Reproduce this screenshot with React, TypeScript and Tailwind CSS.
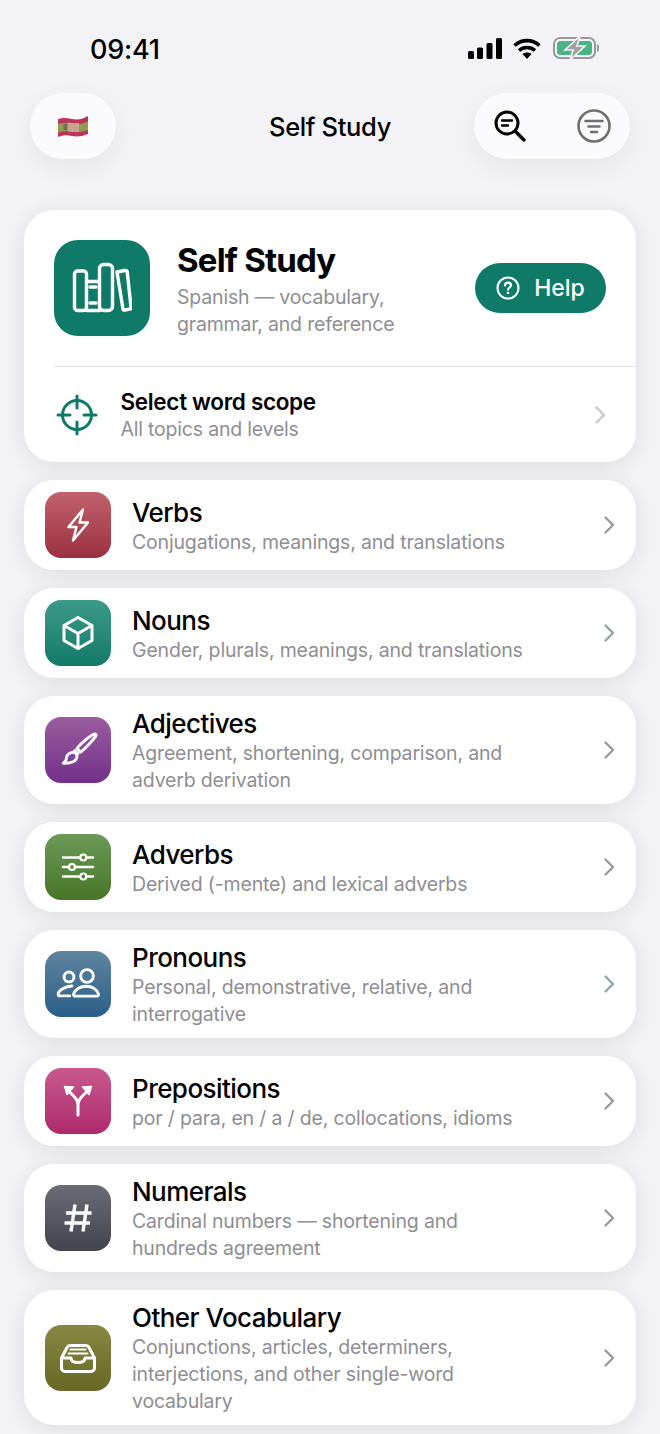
import type { ReactNode } from "react";

const FONT = "font-['Inter','Liberation_Sans',sans-serif]";

const Glyph = ({ children, size = 40 }: { children: ReactNode; size?: number }) => (
    <svg
        width={size}
        height={size}
        viewBox="0 0 40 40"
        fill="none"
        stroke="white"
        strokeWidth="2.6"
        strokeLinecap="round"
        strokeLinejoin="round"
    >
        {children}
    </svg>
);

const rows = [
    {
        title: "Verbs",
        lines: ["Conjugations, meanings, and translations"],
        gradient: "from-[#c2626f] to-[#9a303f]",
        chevron: "#98989d",
        icon: (
            <Glyph>
                <path d="M25 4.500 10.500 22h8L15 35.500 30 17.500h-8.500z" strokeWidth="2.400" />
            </Glyph>
        ),
    },
    {
        title: "Nouns",
        lines: ["Gender, plurals, meanings, and translations"],
        gradient: "from-[#3c9a88] to-[#0f7a68]",
        chevron: "#8ba8a3",
        icon: (
            <Glyph>
                <g strokeWidth="3">
                    <path d="M20 4.500 34 12.500v15L20 35.500 6 27.500v-15z" />
                    <path d="M6.500 12.800 20 20.500l13.500-7.700M20 20.500v15" />
                </g>
            </Glyph>
        ),
    },
    {
        title: "Adjectives",
        lines: ["Agreement, shortening, comparison, and", "adverb derivation"],
        gradient: "from-[#9a5c9e] to-[#74308a]",
        chevron: "#98989d",
        icon: (
            <Glyph size={44}>
                <path d="M35 5.500c-3 .5-12 8-16 13l3.500 3.500c5-4 13-13 14-15.500.3-.8-.7-1.200-1.500-1z" />
                <path d="M17 20.500l3 3" />
                <path d="M13.500 22.500c3-1.500 6 1 5.500 4-.6 3.500-5 6-12.500 5.500 2.500-1.500 3-3 3-5 .2-2 2-3.700 4-4.500z" />
            </Glyph>
        ),
    },
    {
        title: "Adverbs",
        lines: ["Derived (-mente) and lexical adverbs"],
        gradient: "from-[#6b9a58] to-[#4a7526]",
        chevron: "#98989d",
        icon: (
            <Glyph>
                <path d="M5 10.500h17M28.500 10.500h6.500M5 20h6M17 20h18M5 29.500h17M28.500 29.500h6.500" />
                <circle cx="25.300" cy="10.500" r="3" strokeWidth="2.200" />
                <circle cx="14" cy="20" r="3" strokeWidth="2.200" />
                <circle cx="25.300" cy="29.500" r="3" strokeWidth="2.200" />
            </Glyph>
        ),
    },
    {
        title: "Pronouns",
        lines: ["Personal, demonstrative, relative, and", "interrogative"],
        gradient: "from-[#60859f] to-[#2a5f88]",
        chevron: "#8ba8ab",
        icon: (
            <Glyph size={44}>
                <circle cx="11.800" cy="13.600" r="4.500" />
                <circle cx="28.200" cy="12.700" r="5.800" />
                <path d="M14.500 21.800c-6 .2-11.500 3.700-12.500 7-.3 1.200.3 2 1.500 2h9" />
                <path d="M17 31h20c1.500 0 2-.8 1.500-2C37 24.500 32.500 22 27.500 22S18 24.500 16 29c-.5 1.200.5 2 1 2z" />
            </Glyph>
        ),
    },
    {
        title: "Prepositions",
        lines: ["por / para, en / a / de, collocations, idioms"],
        gradient: "from-[#c9588e] to-[#ad2a6c]",
        chevron: "#98989d",
        icon: (
            <Glyph>
                <path d="M20 34V24c0-5-3-8-9.500-14M20 24c0-5 3-8 9.500-14" strokeWidth="3" />
                <path d="M6.500 5.500 15.500 6 9 13.500zM33.500 5.500 24.500 6 31 13.500z" fill="white" strokeWidth="1.400" />
            </Glyph>
        ),
    },
    {
        title: "Numerals",
        lines: ["Cardinal numbers — shortening and", "hundreds agreement"],
        gradient: "from-[#6c6c78] to-[#44444e]",
        chevron: "#98989d",
        icon: (
            <Glyph>
                <path d="M17 6.500 13 33.500M29 6.500l-4 27M8 15h25.500M6.500 25H32" strokeWidth="3.400" strokeLinecap="butt" />
            </Glyph>
        ),
    },
    {
        title: "Other Vocabulary",
        lines: ["Conjunctions, articles, determiners,", "interjections, and other single-word", "vocabulary"],
        gradient: "from-[#888843] to-[#686826]",
        chevron: "#98989d",
        icon: (
            <Glyph>
                <g strokeWidth="3">
                    <path d="M3.500 20 9 9.500c.7-1.500 1.500-2 3-2h16c1.500 0 2.300.5 3 2L36.500 20v10c0 2-1.500 3.500-3.500 3.500H7c-2 0-3.500-1.500-3.500-3.500z" />
                    <path d="M3.500 20H13c0 3 3 4.500 7 4.500s7-1.500 7-4.500h9.500" />
                </g>
                <path d="M12.500 11.500h15M10.500 15.500h19" strokeWidth="2" />
            </Glyph>
        ),
    },
];

const Chevron = ({ color, className = "" }: { color: string; className?: string }) => (
    <svg className={className} width="13" height="20" viewBox="0 0 13 20" fill="none" stroke={color} strokeWidth="2.400" strokeLinecap="round" strokeLinejoin="round">
        <path d="M2.500 2.500 10 10l-7.500 7.500" />
    </svg>
);

const StatusBar = () => (
    <div className="flex h-[93px] items-start justify-between pl-[90px] pr-[61px] pt-[33px]">
        <span className="mt-[1px] text-[27px] leading-[32px] font-medium tracking-[-0.2px] text-black">09:41</span>
        <svg width="131" height="28" viewBox="0 0 131 28" className="mt-[2px]">
            <rect x="0" y="16" width="6" height="8" rx="1.500" fill="black" />
            <rect x="9" y="12.500" width="6" height="11.500" rx="1.500" fill="black" />
            <rect x="18.500" y="8" width="6" height="16" rx="1.500" fill="black" />
            <rect x="28" y="3" width="6" height="21" rx="1.500" fill="black" />
            <path d="M46.500 10.500c7.500-6.500 17.500-6.500 25 0M51 15.500c4.500-4 11.500-4 16 0" fill="none" stroke="black" strokeWidth="3.600" />
            <path d="M54.500 19c2.500-2 6.500-2 9 0L59 24z" fill="black" />
            <rect x="86" y="3" width="41" height="20" rx="6" fill="none" stroke="#98989d" strokeWidth="2" />
            <rect x="89" y="6" width="35" height="14" rx="3.500" fill="#4cb382" />
            <path d="M129 9v8c1.500-.4 2.500-2 2.500-4s-1-3.600-2.500-4z" fill="#98989d" />
            <path d="M112 1 97 15h8l-3 10 15-14h-8z" fill="#a0a0a5" stroke="#f2f2f7" strokeWidth="1.600" />
        </svg>
    </div>
);

const FloatingButton = ({ className, children }: { className: string; children: ReactNode }) => (
    <div className={`flex h-[66px] items-center rounded-[33px] bg-[#fbfbfe] shadow-[0_8px_28px_rgba(0,0,0,0.06)] ${className}`}>
        {children}
    </div>
);

const NavBar = () => (
    <div className="grid h-[66px] grid-cols-[1fr_auto_1fr] items-center px-[30px]">
        <FloatingButton className="w-[86px] justify-center justify-self-start">
            <svg width="30" height="21" viewBox="0 0 30 21">
                <path d="M0 3c5-1.500 9-1 14 0s10 .5 16-3v18c-6 2.500-11 3-16 2s-9-1-14 1z" fill="#b9365a" />
                <path d="M0 8c5-1.500 9-1 14 0s10 .5 16-2.500v8.500c-6 2-11 2-16 1.500s-9-.5-14 1z" fill="#949b52" />
                <path d="M10 6.500c4 .5 8 1 11 .5v9c-3 .3-7 0-11-.5z" fill="#c6a48d" />
                <rect x="5.500" y="8" width="3.500" height="6" fill="#6f6f52" />
            </svg>
        </FloatingButton>
        <span className="pt-[2px] text-[25.500px] leading-[32px] font-medium tracking-[-0.35px] text-black">Self Study</span>
        <FloatingButton className="w-[156px] justify-between justify-self-end pl-[19px] pr-[18px]">
            <svg width="36" height="36" viewBox="0 0 36 36" fill="none" stroke="black" strokeWidth="3" strokeLinecap="round" className="-ml-[1px]">
                <circle cx="15" cy="15" r="11" />
                <path d="m23.500 23.500 8.500 8.500" strokeWidth="3.400" />
                <path d="M10 12.500h10M10 17.500h6" strokeWidth="2.400" />
            </svg>
            <svg width="36" height="36" viewBox="0 0 36 36" fill="none" stroke="#6e6e73" strokeWidth="2.600" strokeLinecap="round">
                <circle cx="18" cy="18" r="15.500" />
                <path d="M9.500 13h17M12.500 18.500h11M15 24h6" />
            </svg>
        </FloatingButton>
    </div>
);

const HeroCard = () => (
    <div className="rounded-[30px] bg-white shadow-[0_4px_24px_rgba(0,0,0,0.09)]">
        <div className="flex h-[156px] items-start pl-[30px] pr-[30px] pt-[30px]">
            <div className="flex h-[96px] w-[96px] shrink-0 items-center justify-center rounded-[24px] bg-[#0f7a68]">
                <svg width="60" height="52" viewBox="0 0 60 52" fill="none" stroke="white" strokeWidth="3.400" strokeLinejoin="round" strokeLinecap="round">
                    <rect x="2.500" y="9" width="12" height="39.500" rx="3" />
                    <path d="M14.500 19.500h13M14.500 48.500h13" />
                    <path d="M18 25h6M18 41h6" />
                    <rect x="27.500" y="2.500" width="13" height="46" rx="4" />
                    <path d="M45 10l8-1.500c1-.2 2 .4 2.200 1.400L59 45c.2 1-.4 2-1.400 2.200l-4.500.8c-1 .2-2-.4-2.200-1.400z" />
                </svg>
            </div>
            <div className="ml-[27px] min-w-0 flex-1">
                <div className="text-[33px] leading-[40px] font-bold tracking-[-0.8px] text-black">Self Study</div>
                <div className="mt-[4px] text-[19.500px] leading-[27px] tracking-[-0.18px] text-[#8e8e93]">
                    Spanish — vocabulary,
                    <br />
                    grammar, and reference
                </div>
            </div>
            <div className="mt-[23px] flex h-[50px] w-[131px] shrink-0 items-center justify-center gap-[14px] rounded-full bg-[#0f7a68]">
                <svg width="24" height="24" viewBox="0 0 24 24" fill="none" stroke="white" strokeWidth="2">
                    <circle cx="12" cy="12" r="10.500" />
                    <path d="M9 9.500c0-1.700 1.300-2.800 3-2.800s3 1 3 2.600c0 2.200-3 2.300-3 4.400" strokeWidth="2.200" strokeLinecap="round" />
                    <circle cx="12" cy="17" r="1.300" fill="white" stroke="none" />
                </svg>
                <span className="text-[23px] leading-[28px] font-medium text-white">Help</span>
            </div>
        </div>
        <div className="ml-[30px] h-[1px] bg-[#e4e4e6]" />
        <div className="flex h-[95px] items-center pl-[32px] pr-[29px]">
            <svg width="42" height="42" viewBox="0 0 42 42" fill="none" stroke="#0f7a68" strokeWidth="3" strokeLinecap="round">
                <circle cx="21" cy="21" r="14.500" />
                <path d="M21 2v12M21 28v12M2 21h12M28 21h12" />
            </svg>
            <div className="ml-[22.500px] flex-1 pt-[2px]">
                <div className="text-[22.500px] leading-[28px] font-semibold tracking-[-0.32px] text-black">Select word scope</div>
                <div className="text-[19.500px] leading-[27px] tracking-[-0.2px] text-[#8e8e93]">All topics and levels</div>
            </div>
            <Chevron color="#c7c7cc" />
        </div>
    </div>
);

const TopicRow = ({ row }: { row: (typeof rows)[number] }) => (
    <div className="flex min-h-[90px] items-center rounded-[30px] bg-white pb-[10px] pl-[21px] pr-[21px] pt-[12px] shadow-[0_4px_24px_rgba(0,0,0,0.09)]">
        <div className={`mb-[2px] flex h-[66px] w-[66px] shrink-0 items-center justify-center rounded-[16px] bg-linear-to-b ${row.gradient}`}>
            {row.icon}
        </div>
        <div className="ml-[21px] flex-1 pt-[1px]">
            <div className="text-[26px] leading-[30px] font-medium tracking-[-0.55px] text-black">{row.title}</div>
            <div className="mt-[1px] text-[19.500px] leading-[27px] tracking-[-0.17px] text-[#8e8e93]">
                {row.lines.map((line) => (
                    <div key={line}>{line}</div>
                ))}
            </div>
        </div>
        <Chevron color={row.chevron} className="mb-[2px] translate-x-[1px]" />
    </div>
);

export default function App() {
    return (
        <div className={`h-[1434px] w-[660px] overflow-hidden bg-[#f2f2f7] ${FONT}`}>
            <StatusBar />
            <NavBar />
            <div className="mt-[51px] flex flex-col gap-[18px] px-[24px]">
                <HeroCard />
                {rows.map((row) => (
                    <TopicRow key={row.title} row={row} />
                ))}
            </div>
        </div>
    );
}
